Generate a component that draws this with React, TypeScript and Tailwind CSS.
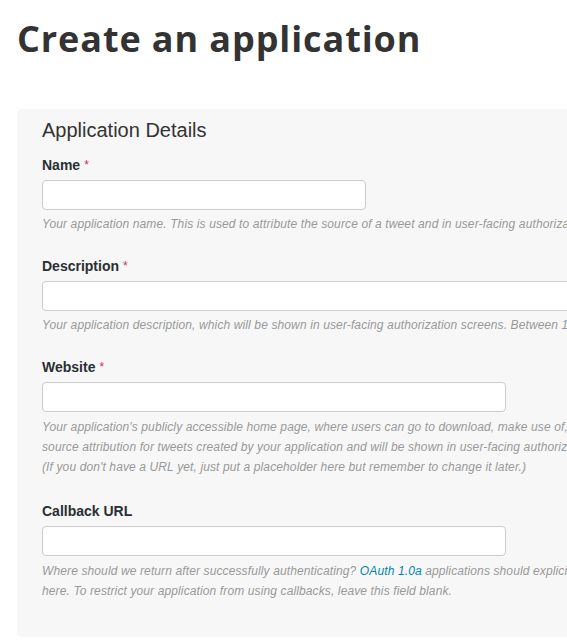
import React from "react";

function Req() {
  return <span className="text-[#e0245e] font-normal text-[12px] align-top ml-[4px]">*</span>;
}

export default function App() {
  return (
    <div className="w-full overflow-hidden bg-white min-h-[642px]" style={{ fontFamily: '"Liberation Sans", Arial, sans-serif' }}>
      <div className="pl-[17px]">
        <h1
          className="text-[#333333] font-bold text-[36px] leading-[44px] pt-[17px] m-0 tracking-[0.9px]"
          style={{ fontFamily: '"Open Sans", Lato, sans-serif' }}
        >
          Create an application
        </h1>
        <div className="mt-[48px] w-[1090px] bg-[#f7f7f7] rounded-[5px] pl-[25px] pr-[25px] pt-[9px] pb-[36px]">
          <div className="w-[1032px]">
            <h2 className="text-[20px] leading-[24px] text-[#333333] font-normal mb-[13px]">Application Details</h2>

            <div className="mb-[22px]">
              <label className="block text-[14px] leading-[20px] font-bold text-[#292f33] mb-[5px]">
                Name<Req />
              </label>
              <input className="block w-[324px] h-[30px] bg-white border border-[#cccccc] rounded-[4px] outline-none" />
              <p className="mt-[4px] text-[12px] leading-[20px] italic text-[#999999] tracking-[0.12px]">
                Your application name. This is used to attribute the source of a tweet and in user-facing authorization screens. 32 characters max.
              </p>
            </div>

            <div className="mb-[22px]">
              <label className="block text-[14px] leading-[20px] font-bold text-[#292f33] mb-[5px]">
                Description<Req />
              </label>
              <input className="block w-full h-[30px] bg-white border border-[#cccccc] rounded-[4px] outline-none" />
              <p className="mt-[4px] text-[12px] leading-[20px] italic text-[#999999] tracking-[0.12px]">
                Your application description, which will be shown in user-facing authorization screens. Between 10 and 200 characters max.
              </p>
            </div>

            <div className="mb-[24px]">
              <label className="block text-[14px] leading-[20px] font-bold text-[#292f33] mb-[5px]">
                Website<Req />
              </label>
              <input className="block w-[464px] h-[30px] bg-white border border-[#cccccc] rounded-[4px] outline-none" />
              <p className="mt-[5px] text-[12px] leading-[20px] italic text-[#999999] tracking-[0.12px]">
                Your application's publicly accessible home page, where users can go to download, make use of, or find out more information about your application. This fully-qualified URL is used in the source attribution for tweets created by your application and will be shown in user-facing authorization screens.
                <br />
                (If you don't have a URL yet, just put a placeholder here but remember to change it later.)
              </p>
            </div>

            <div>
              <label className="block text-[14px] leading-[20px] font-bold text-[#292f33] mb-[5px]">
                Callback URL
              </label>
              <input className="block w-[464px] h-[30px] bg-white border border-[#cccccc] rounded-[4px] outline-none" />
              <p className="mt-[5px] text-[12px] leading-[20px] italic text-[#999999] tracking-[0.12px]">
                Where should we return after successfully authenticating?{" "}
                <a className="text-[#0084b4]">OAuth 1.0a</a> applications should explicitly specify their oauth_callback URL on the request token step, regardless of the value given here. To restrict your application from using callbacks, leave this field blank.
              </p>
            </div>
          </div>
        </div>
      </div>
    </div>
  );
}
